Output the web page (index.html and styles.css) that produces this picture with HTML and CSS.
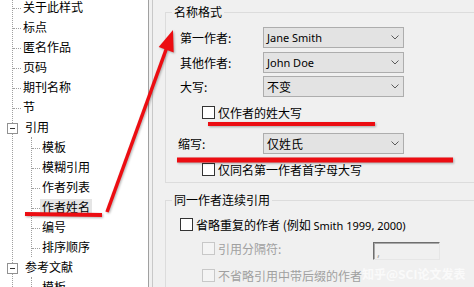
FILE: index.html
```html
<!DOCTYPE html>
<html lang="zh-CN">
<head>
  <meta charset="UTF-8">
  <title>作者姓名</title>
  <link rel="stylesheet" href="styles.css">
</head>
<body>

<div class="window">
  <!-- 左侧样式树 -->
  <div class="tree-pane">
    <ul class="tree">
      <li>关于此样式</li>
      <li>标点</li>
      <li>匿名作品</li>
      <li>页码</li>
      <li>期刊名称</li>
      <li>节</li>
      <li class="open">引用
        <ul>
          <li>模板</li>
          <li>模糊引用</li>
          <li>作者列表</li>
          <li><span class="sel">作者姓名</span></li>
          <li>编号</li>
          <li>排序顺序</li>
        </ul>
      </li>
      <li class="open">参考文献
        <ul>
          <li>模板</li>
        </ul>
      </li>
    </ul>
  </div>

  <div class="splitter"></div>

  <!-- 右侧设置 -->
  <div class="content">
    <fieldset class="group">
      <legend>名称格式</legend>
      <div class="field">
        <label>第一作者:</label>
        <div class="combo"><span class="lat">Jane Smith</span><svg width="8" height="5" viewBox="0 0 8 5"><polyline points="0.5,0.5 4,4 7.5,0.5"/></svg></div>
      </div>
      <div class="field">
        <label>其他作者:</label>
        <div class="combo"><span class="lat">John Doe</span><svg width="8" height="5" viewBox="0 0 8 5"><polyline points="0.5,0.5 4,4 7.5,0.5"/></svg></div>
      </div>
      <div class="field">
        <label>大写:</label>
        <div class="combo"><span>不变</span><svg width="8" height="5" viewBox="0 0 8 5"><polyline points="0.5,0.5 4,4 7.5,0.5"/></svg></div>
      </div>
      <div class="check">
        <span class="box"></span><span>仅作者的姓大写</span>
      </div>
      <div class="field abbr">
        <label>缩写:</label>
        <div class="combo"><span>仅姓氏</span><svg width="8" height="5" viewBox="0 0 8 5"><polyline points="0.5,0.5 4,4 7.5,0.5"/></svg></div>
      </div>
      <div class="check">
        <span class="box"></span><span>仅同名第一作者首字母大写</span>
      </div>
    </fieldset>

    <fieldset class="group repeat">
      <legend>同一作者连续引用</legend>
      <div class="check main">
        <span class="box"></span><span>省略重复的作者 (例如 <span class="lat">Smith 1999, 2000)</span></span>
      </div>
      <div class="check off sep">
        <span class="box"></span><span class="sep-label">引用分隔符:</span>
        <div class="textbox"><span class="lat">,</span></div>
      </div>
      <div class="check off last">
        <span class="box"></span><span>不省略引用中带后缀的作者</span>
      </div>
    </fieldset>
  </div>

  <!-- 红色标注 -->
  <svg class="marks" width="474" height="287" viewBox="0 0 474 287">
    <line x1="25" y1="214" x2="102" y2="215" stroke-width="4"/>
    <line x1="107" y1="212" x2="167" y2="47" stroke-width="3.5"/>
    <polygon points="173,30 158.7,47.1 173.7,52.5"/>
    <line x1="208" y1="124" x2="375" y2="124" stroke-width="4"/>
    <line x1="177" y1="160" x2="453" y2="160" stroke-width="5"/>
  </svg>

  <div class="watermark">知乎@SCI论文发表</div>
</div>

</body>
</html>
```

FILE: styles.css
```css
* {
  box-sizing: border-box;
}
body {
  margin: 0;
  font-family: "Noto Sans CJK SC", sans-serif;
  font-size: 12px;
  color: #000;
}
.window {
  position: relative;
  width: 474px;
  height: 287px;
  display: flex;
  overflow: hidden;
  background: #f0f0f0;
}

/* 样式树 */
.tree-pane {
  width: 149px;
  flex: none;
  background: #fff;
  border-right: 1px solid #a0a0a0;
  overflow: hidden;
}
.tree, .tree ul {
  list-style: none;
  padding: 0;
  border-left: 1px dotted #a0a0a0;
}
.tree {
  margin: -3px 0 0 12px;
}
.tree ul {
  margin: 0 0 0 18px;
}
.tree li {
  line-height: 20px;
  white-space: nowrap;
}
.tree li::before {
  content: "";
  display: inline-block;
  width: 8px;
  margin-right: 2px;
  border-top: 1px dotted #a0a0a0;
  vertical-align: middle;
}
.tree li.open::before {
  width: 9px;
  height: 9px;
  margin-left: -6px;
  margin-right: 7px;
  border: 1px solid #919191;
  background: #fff linear-gradient(#333, #333) center / 5px 1px no-repeat;
}
.sel {
  display: inline-block;
  line-height: 16px;
  padding: 0 2px;
  margin-left: -2px;
  background: #e5e5e5;
}

.splitter {
  width: 4px;
  flex: none;
  border-right: 1px solid #c8c8c8;
}

/* 设置区 */
.content {
  flex: 1;
  padding: 4px 0 0 12px;
}
.group {
  width: 400px;
  margin: 0;
  padding: 7px 0 6px 6px;
  border: 1px solid #dcdcdc;
}
.group legend {
  padding: 0 2px;
  line-height: 16px;
}
.lat {
  font-family: "Noto Sans", sans-serif;
  font-size: 11px;
}
.field {
  display: flex;
  align-items: center;
  height: 21px;
  padding-left: 8px;
}
.field + .field {
  margin-top: 3.5px;
}
.field label {
  width: 83px;
}
.field.abbr {
  margin-top: 14px;
}
.field.abbr label {
  margin-left: -2px;
  width: 85px;
}
.combo {
  width: 141px;
  height: 21px;
  display: flex;
  align-items: center;
  justify-content: space-between;
  padding: 0 4px 0 3px;
  border: 1px solid #adadad;
  background: #e3e3e3;
}
.combo svg polyline {
  fill: none;
  stroke: #5a5a5a;
  stroke-width: 1;
}
.check {
  display: flex;
  align-items: center;
  height: 13px;
  line-height: 13px;
  padding-left: 30px;
  margin-top: 9px;
  white-space: nowrap;
}
.box {
  width: 13px;
  height: 13px;
  flex: none;
  margin-right: 3px;
  border: 1px solid #333;
  background: #fff;
}
.check.off {
  color: #a0a0a0;
}
.check.off .box {
  border-color: #c8c8c8;
  background: #f4f4f4;
}

.repeat {
  margin-top: 9px;
  padding-top: 10px;
}
.check.main {
  padding-left: 8px;
  margin-top: 0;
}
.check.sep {
  align-items: flex-start;
  height: 18px;
  margin-top: 11px;
}
.sep-label {
  width: 155px;
}
.textbox {
  width: 67px;
  height: 18px;
  padding: 3px 0 0 3px;
  line-height: 12px;
  border: 1px solid;
  border-color: #6e6e6e #e6e6e6 #e6e6e6 #6e6e6e;
  box-shadow: inset 1px 1px 0 #a8a8a8;
  background: #f0f0f0;
  color: #a0a0a0;
}
.check.last {
  margin-top: 9px;
}

/* 标注层 */
.marks {
  position: absolute;
  left: 0;
  top: 0;
  pointer-events: none;
  filter: drop-shadow(1px 1px 1px rgba(0, 0, 0, 0.3));
}
.marks line {
  stroke: #ec0d12;
}
.marks polygon {
  fill: #ec0d12;
}
.watermark {
  position: absolute;
  left: 362px;
  top: 265px;
  font-weight: bold;
  color: rgba(255, 255, 255, 0.7);
  pointer-events: none;
}
```
